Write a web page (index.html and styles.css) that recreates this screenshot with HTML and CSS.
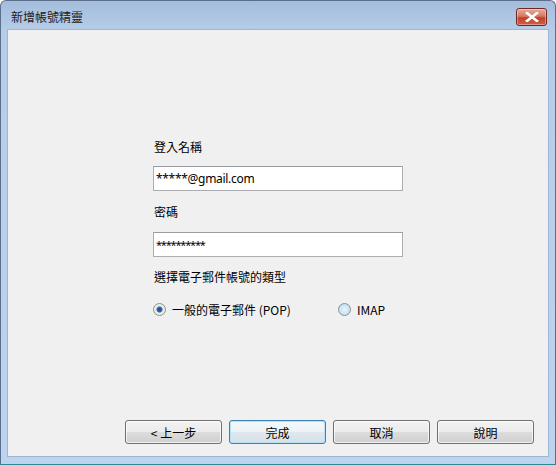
FILE: index.html
```html
<!DOCTYPE html>
<html lang="zh-Hant">
<head>
<meta charset="utf-8">
<title>新增帳號精靈</title>
<link rel="stylesheet" href="styles.css">
</head>
<body>
<div class="window">
  <div class="titlebar">
    <span class="title">新增帳號精靈</span>
    <button class="close" aria-label="關閉">
      <svg width="14" height="10" viewBox="0 0 14 10"><path d="M2 1 L12 9 M12 1 L2 9" stroke="#fff" stroke-width="2.6" stroke-linecap="square"/><path d="M2 1 L12 9 M12 1 L2 9" stroke="#fff" stroke-width="1.6" stroke-linecap="square"/></svg>
    </button>
  </div>
  <div class="client">
    <div class="form">
      <div class="label">登入名稱</div>
      <div class="field email">*****@gmail.com</div>
      <div class="label l2">密碼</div>
      <div class="field pass">**********</div>
      <div class="label l3">選擇電子郵件帳號的類型</div>
      <div class="radios">
        <label class="radio pop"><span class="dot checked"></span>一般的電子郵件 (POP)</label>
        <label class="radio"><span class="dot"></span>IMAP</label>
      </div>
    </div>
    <div class="buttons">
      <button class="btn">&lt; 上一步</button>
      <button class="btn default">完成</button>
      <button class="btn">取消</button>
      <button class="btn">說明</button>
    </div>
  </div>
</div>
</body>
</html>
```
FILE: styles.css
```css
html, body {
  margin: 0;
  padding: 0;
  background: #fff;
}
body {
  font-family: "Noto Sans CJK TC", "Noto Sans", sans-serif;
  font-size: 12px;
  color: #000;
}
.window {
  width: 556px;
  height: 465px;
  box-sizing: border-box;
  display: flex;
  flex-direction: column;
  background: linear-gradient(to bottom, #a4bddb 0px, #b6cde8 29px, #bcd4ee 100%);
  border: 1px solid #5b6f8c;
  border-bottom-color: #2a8a99;
  border-radius: 6px 6px 0 0;
  padding: 0 6px 7px 6px;
}
.titlebar {
  height: 28px;
  display: flex;
  align-items: center;
  justify-content: space-between;
  flex: none;
}
.title {
  font-size: 12px;
  color: #1a1a1a;
  padding-left: 4px;
  padding-top: 3px;
}
.close {
  width: 31px;
  height: 18px;
  margin-top: 3px;
  margin-right: 2px;
  border: 1px solid #6e2a22;
  border-radius: 3px;
  background: linear-gradient(to bottom, #e9a99c 0%, #d47a68 45%, #c0402a 55%, #d0604a 100%);
  display: flex;
  align-items: center;
  justify-content: center;
  padding: 0;
  box-shadow: inset 0 0 0 1px rgba(255,255,255,0.35);
}
.client {
  flex: 1;
  background: #f0f0f0;
  border: 1px solid #9fb6d2;
  display: flex;
  flex-direction: column;
  justify-content: space-between;
}
.form {
  padding: 109px 0 0 145px;
  display: flex;
  flex-direction: column;
}
.label {
  height: 16px;
  line-height: 16px;
  padding-left: 1px;
  margin-bottom: 11px;
}
.l2 { margin-top: 13px; margin-bottom: 12px; }
.l3 { margin-top: 12px; margin-bottom: 16px; }
.field {
  width: 250px;
  height: 25px;
  box-sizing: border-box;
  background: #fff;
  border: 1px solid #abadb3;
  border-top-color: #9a9ca3;
  padding-left: 2px;
  line-height: 23px;
  font-size: 12px;
  letter-spacing: -0.3px;
  font-family: "Noto Sans", "Noto Sans CJK TC", sans-serif;
  color: #000;
}
.pass {
  font-size: 11px;
  letter-spacing: -1.2px;
}
.radios {
  display: flex;
  align-items: center;
  height: 16px;
}
.radio {
  display: flex;
  align-items: center;
  gap: 6px;
  font-size: 12px;
}
.radio.pop { width: 185px; }
.dot {
  width: 13px;
  height: 13px;
  box-sizing: border-box;
  border-radius: 50%;
  border: 1px solid #8e8f8f;
  background: radial-gradient(circle at 50% 50%, #e6f4fc 0%, #c8e4f6 60%, #a9d2ee 100%);
}
.dot.checked {
  background: radial-gradient(circle at 50% 50%, #1d4d7f 0, #2d6ea6 2.5px, #e9e9e9 3.5px, #f4f4f4 100%);
}
.buttons {
  display: flex;
  justify-content: flex-end;
  gap: 7px;
  padding: 0 14px 12px 0;
}
.btn {
  width: 97px;
  height: 24px;
  box-sizing: border-box;
  border: 1px solid #707070;
  border-radius: 3px;
  background: linear-gradient(to bottom, #f2f2f2 0%, #ebebeb 50%, #dddddd 51%, #cfcfcf 100%);
  font-family: "Noto Sans CJK TC", "Noto Sans", sans-serif;
  font-size: 12px;
  color: #000;
  padding: 0;
  box-shadow: inset 0 0 0 1px rgba(255,255,255,0.7);
}
.btn.default {
  border-color: #3c7fb1;
  background: linear-gradient(to bottom, #f4f8fb 0%, #edf2f6 50%, #e0e8ef 51%, #d6dfe7 100%);
  box-shadow: inset 0 0 0 1px #b9e1f6;
}
```
